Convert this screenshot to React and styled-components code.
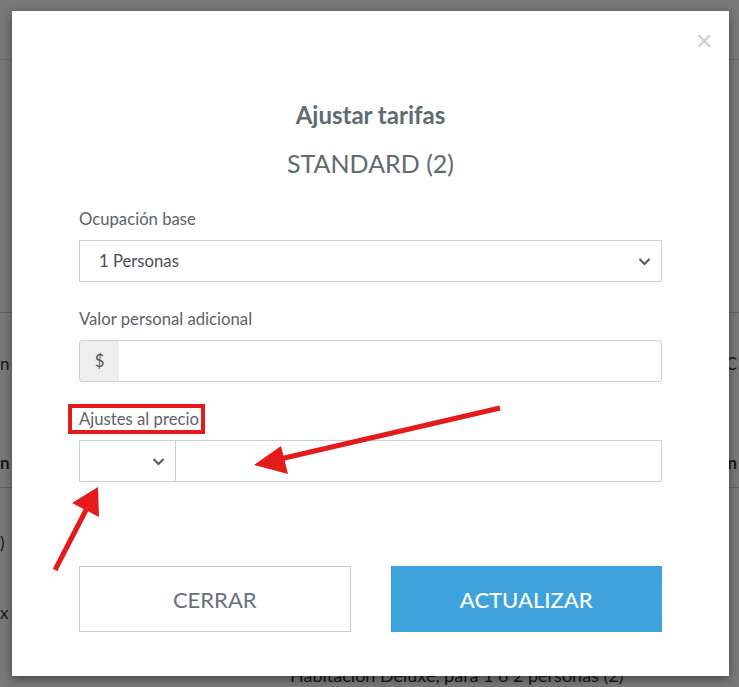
import React from "react";
import styled, { createGlobalStyle } from "styled-components";

const GlobalStyle = createGlobalStyle`
  html, body {
    margin: 0;
    padding: 0;
    background: #ffffff;
    font-family: "Lato", "Open Sans", sans-serif;
  }
  * { box-sizing: border-box; }
`;

const Page = styled.div`
  width: 739px;
  height: 687px;
  overflow: hidden;
  position: relative;
  color: #333;
`;

const TopNav = styled.nav`
  height: 60px;
  display: flex;
  align-items: flex-start;
  gap: 42px;
  padding: 8px 0 0 155px;
  font-size: 17px;
  border-bottom: 1px solid #ddd;
`;

const NavItem = styled.span`
  color: ${(p) => (p.$active ? "#1b6f8c" : "#333")};
`;

const BgRow = styled.div`
  display: flex;
  justify-content: space-between;
  align-items: center;
  height: ${(p) => p.$h || 50}px;
  font-size: 17px;
  font-weight: ${(p) => (p.$bold ? 700 : 400)};
  border-bottom: ${(p) => (p.$line ? "1px solid #ccc" : "none")};
  padding: 0 2px 0 0;
`;

const BgFooter = styled.div`
  padding-left: 290px;
  font-size: 18px;
  line-height: 21px;
  margin-top: 37px;
`;

const Backdrop = styled.div`
  position: absolute;
  inset: 0;
  background: rgba(0, 0, 0, 0.53);
`;

const Modal = styled.div`
  position: absolute;
  left: 12px;
  top: 11px;
  width: 717px;
  height: 665px;
  background: #fff;
  padding: 89px 67px 44px;
  display: flex;
  flex-direction: column;
  box-shadow: 0 3px 9px rgba(0, 0, 0, 0.4);
`;

const Close = styled.span`
  position: absolute;
  right: 16px;
  top: 20px;
  font-size: 22px;
  line-height: 22px;
  color: #cfcfcf;
  font-family: "DejaVu Sans", sans-serif;
  font-weight: 300;
`;

const Title = styled.h2`
  margin: 0;
  text-align: center;
  font-size: 24px;
  line-height: 30px;
  font-weight: 700;
  color: #606a6f;
`;

const Subtitle = styled.h3`
  margin: 18px 0 0;
  text-align: center;
  font-size: 25px;
  line-height: 30px;
  font-weight: 400;
  color: #606a6f;
`;

const Form = styled.div`
  margin-top: 30px;
  display: flex;
  flex-direction: column;
  gap: 26px;
`;

const Group = styled.div`
  display: flex;
  flex-direction: column;
  gap: 10px;
`;

const Label = styled.label`
  font-size: 16.7px;
  line-height: 22px;
  color: #5d6368;
`;

const Field = styled.div`
  display: flex;
  height: 42px;
`;

const SelectBox = styled.div`
  width: ${(p) => p.$w || "100%"};
  flex: ${(p) => (p.$w ? "none" : "1")};
  height: 42px;
  border: 1px solid #cfcfcf;
  display: flex;
  align-items: center;
  justify-content: space-between;
  padding: 0 10px 0 19px;
  font-size: 16.7px;
  color: #4a4f54;
  background: #fff;
`;

const Addon = styled.span`
  width: 40px;
  height: 42px;
  border: 1px solid #cfcfcf;
  border-right: none;
  border-radius: 4px 0 0 4px;
  background: #eeeeee;
  display: flex;
  align-items: center;
  justify-content: center;
  font-size: 16.7px;
  color: #555;
`;

const TextInput = styled.div`
  flex: 1;
  height: 42px;
  border: 1px solid #cfcfcf;
  border-left: ${(p) => (p.$joined ? "none" : "1px solid #cfcfcf")};
  border-radius: ${(p) => (p.$round ? "0 4px 4px 0" : "0")};
  background: #fff;
`;

const Actions = styled.div`
  margin-top: auto;
  display: flex;
  gap: 40px;
`;

const Button = styled.button`
  flex: 1;
  height: 66px;
  font-family: "Lato", sans-serif;
  font-size: 22px;
  border: 1px solid ${(p) => (p.$primary ? "#3ea2dc" : "#cccccc")};
  background: ${(p) => (p.$primary ? "#3ea2dc" : "#fff")};
  color: ${(p) => (p.$primary ? "#fff" : "#6a7074")};
  font-weight: ${(p) => (p.$primary ? 500 : 400)};
  border-radius: 0;
`;

const Annotations = styled.svg`
  position: absolute;
  left: 0;
  top: 0;
  pointer-events: none;
`;

const Chevron = () => (
  <svg width="13" height="9" viewBox="0 0 13 9">
    <path d="M1.5 2 L6.5 7 L11.5 2" fill="none" stroke="#555" strokeWidth="2" />
  </svg>
);

export default function App() {
  return (
    <Page>
      <GlobalStyle />
      <TopNav>
        <NavItem>Disponibilidad</NavItem>
        <NavItem>Reservas</NavItem>
        <NavItem $active>Canales</NavItem>
        <NavItem>Configuración</NavItem>
      </TopNav>
      <BgRow $h={253} $line />
      <BgRow $h={100}>
        <span>n</span>
        <span>C</span>
      </BgRow>
      <BgRow $h={25} />
      <BgRow $h={50} $bold $line>
        <span>n</span>
        <span>n</span>
      </BgRow>
      <BgRow $h={108}>
        <span>)</span>
      </BgRow>
      <BgRow $h={32}>
        <span>x |</span>
      </BgRow>
      <BgFooter>Habitación Deluxe, para 1 o 2 personas (2)</BgFooter>
      <Backdrop />

      <Modal>
        <Close>✕</Close>
        <Title>Ajustar tarifas</Title>
        <Subtitle>STANDARD (2)</Subtitle>
        <Form>
          <Group>
            <Label>Ocupación base</Label>
            <Field>
              <SelectBox>
                <span>1 Personas</span>
                <Chevron />
              </SelectBox>
            </Field>
          </Group>
          <Group>
            <Label>Valor personal adicional</Label>
            <Field>
              <Addon>$</Addon>
              <TextInput $joined $round />
            </Field>
          </Group>
          <Group>
            <Label>Ajustes al precio</Label>
            <Field>
              <SelectBox $w="97px">
                <span />
                <Chevron />
              </SelectBox>
              <TextInput $joined />
            </Field>
          </Group>
        </Form>
        <Actions>
          <Button>CERRAR</Button>
          <Button $primary>ACTUALIZAR</Button>
        </Actions>
      </Modal>

      <Annotations width="739" height="687" viewBox="0 0 739 687">
        <rect x="70" y="406" width="133" height="26" fill="none" stroke="#e31b1b" strokeWidth="4" />
        <line x1="500" y1="408" x2="280" y2="459" stroke="#e31b1b" strokeWidth="5" />
        <polygon points="254,465 281,446 288,474" fill="#e31b1b" />
        <line x1="55" y1="570" x2="86" y2="510" stroke="#e31b1b" strokeWidth="5" />
        <polygon points="98,487 99,517 72,503" fill="#e31b1b" />
      </Annotations>
    </Page>
  );
}
